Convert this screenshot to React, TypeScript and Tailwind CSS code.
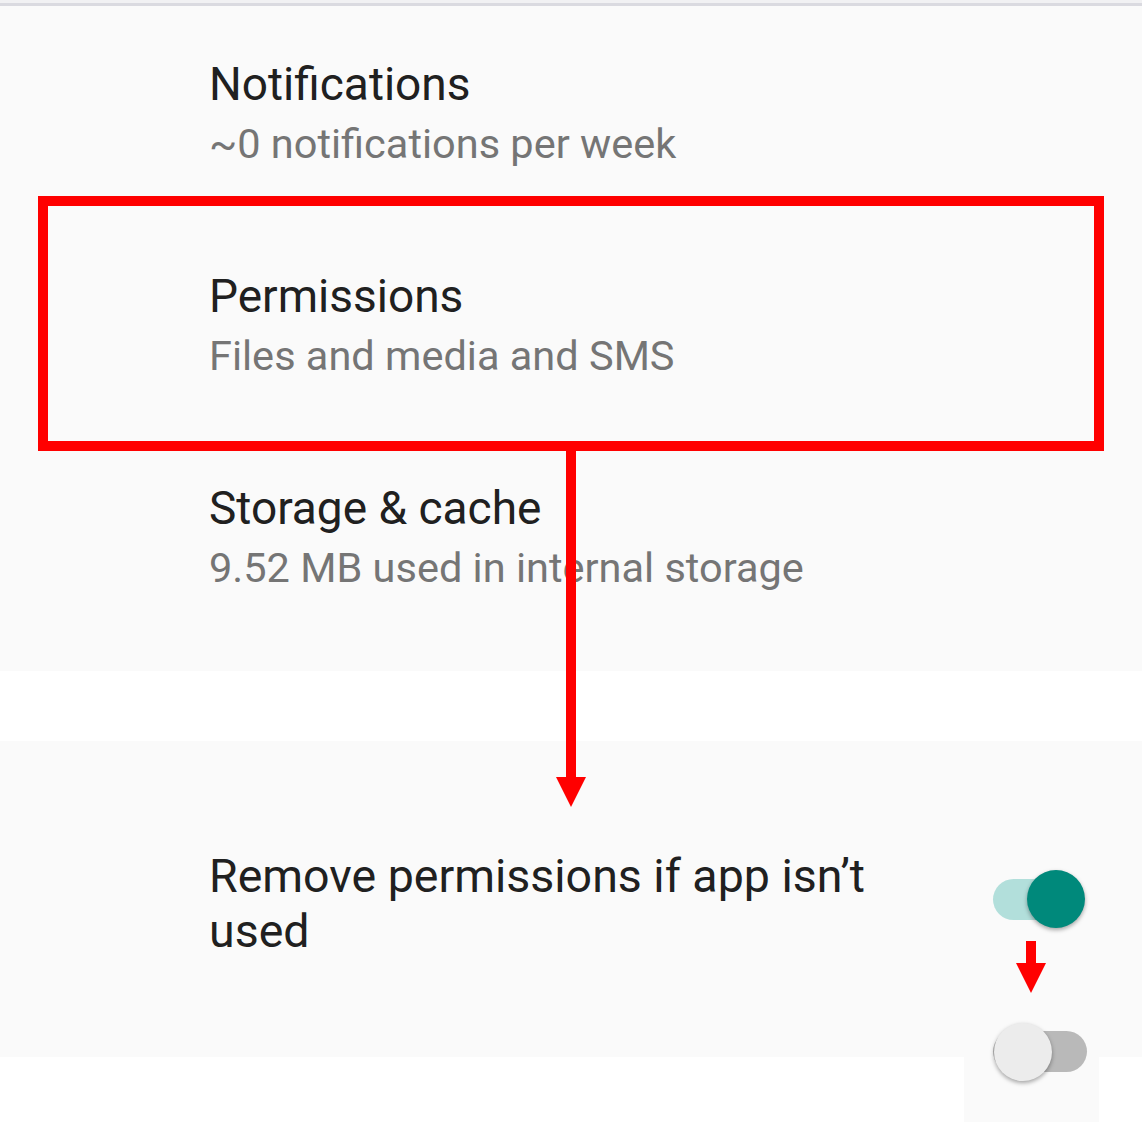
import React from "react";

function Item({ title, subtitle }: { title: string; subtitle: string }) {
  return (
    <div className="flex h-[212px] flex-col justify-center pl-[209px]">
      <div className="text-[46px] leading-[59px] text-[#202020]">{title}</div>
      <div className="text-[41.5px] leading-[59px] text-[#757575]">{subtitle}</div>
    </div>
  );
}

export default function App() {
  return (
    <div className="relative h-[1122px] w-[1142px] overflow-hidden bg-white font-['Roboto',sans-serif]">
      <div className="h-[3px] bg-[#f1f1f3]" />
      <div className="h-[3px] bg-[#dadae0]" />
      <div className="flex flex-col bg-[#fafafa] pb-[27px] pt-[2px]">
        <Item title="Notifications" subtitle="~0 notifications per week" />
        <Item title="Permissions" subtitle="Files and media and SMS" />
        <Item title="Storage & cache" subtitle="9.52 MB used in internal storage" />
      </div>
      <div className="h-[70px] bg-white" />
      <div className="flex h-[316px] items-center bg-[#fafafa] pl-[209px]">
        <div className="w-[720px] pt-[10px] text-[46.5px] leading-[55px] text-[#202020]">
          Remove permissions if app isn’t used
        </div>
        <div className="relative ml-[64px] h-[58px] w-[94px]">
          <div className="absolute left-0 top-[9px] h-[41px] w-[90px] rounded-full bg-[#b2dfdb]" />
          <div className="absolute right-[2px] top-0 h-[58px] w-[58px] rounded-full bg-[#00897b] shadow-[0_2px_4px_rgba(0,0,0,0.35)]" />
        </div>
      </div>

      {/* annotation: red box */}
      <div className="absolute left-[38px] top-[196px] h-[255px] w-[1066px] border-[10px] border-[#ff0000]" />
      {/* annotation: long arrow */}
      <svg className="absolute left-[556px] top-[450px]" width="30" height="358" viewBox="0 0 30 358">
        <rect x="10" y="0" width="10" height="328" fill="#ff0000" />
        <polygon points="0,327 30,327 15,357" fill="#ff0000" />
      </svg>
      {/* annotation: small arrow */}
      <svg className="absolute left-[1016px] top-[941px]" width="30" height="52" viewBox="0 0 30 52">
        <rect x="10" y="0" width="10" height="23" fill="#ff0000" />
        <polygon points="0,22 30,22 15,52" fill="#ff0000" />
      </svg>
      {/* annotation: off toggle */}
      <div className="absolute left-[964px] top-[1057px] h-[65px] w-[135px] bg-[#fafafa]" />
      <div className="absolute left-[993px] top-[1031px] h-[41px] w-[94px] rounded-full bg-[#b9b9b9]" />
      <div className="absolute left-[994px] top-[1023px] h-[58px] w-[58px] rounded-full bg-[#ececec] shadow-[0_2px_4px_rgba(0,0,0,0.35)]" />
    </div>
  );
}
